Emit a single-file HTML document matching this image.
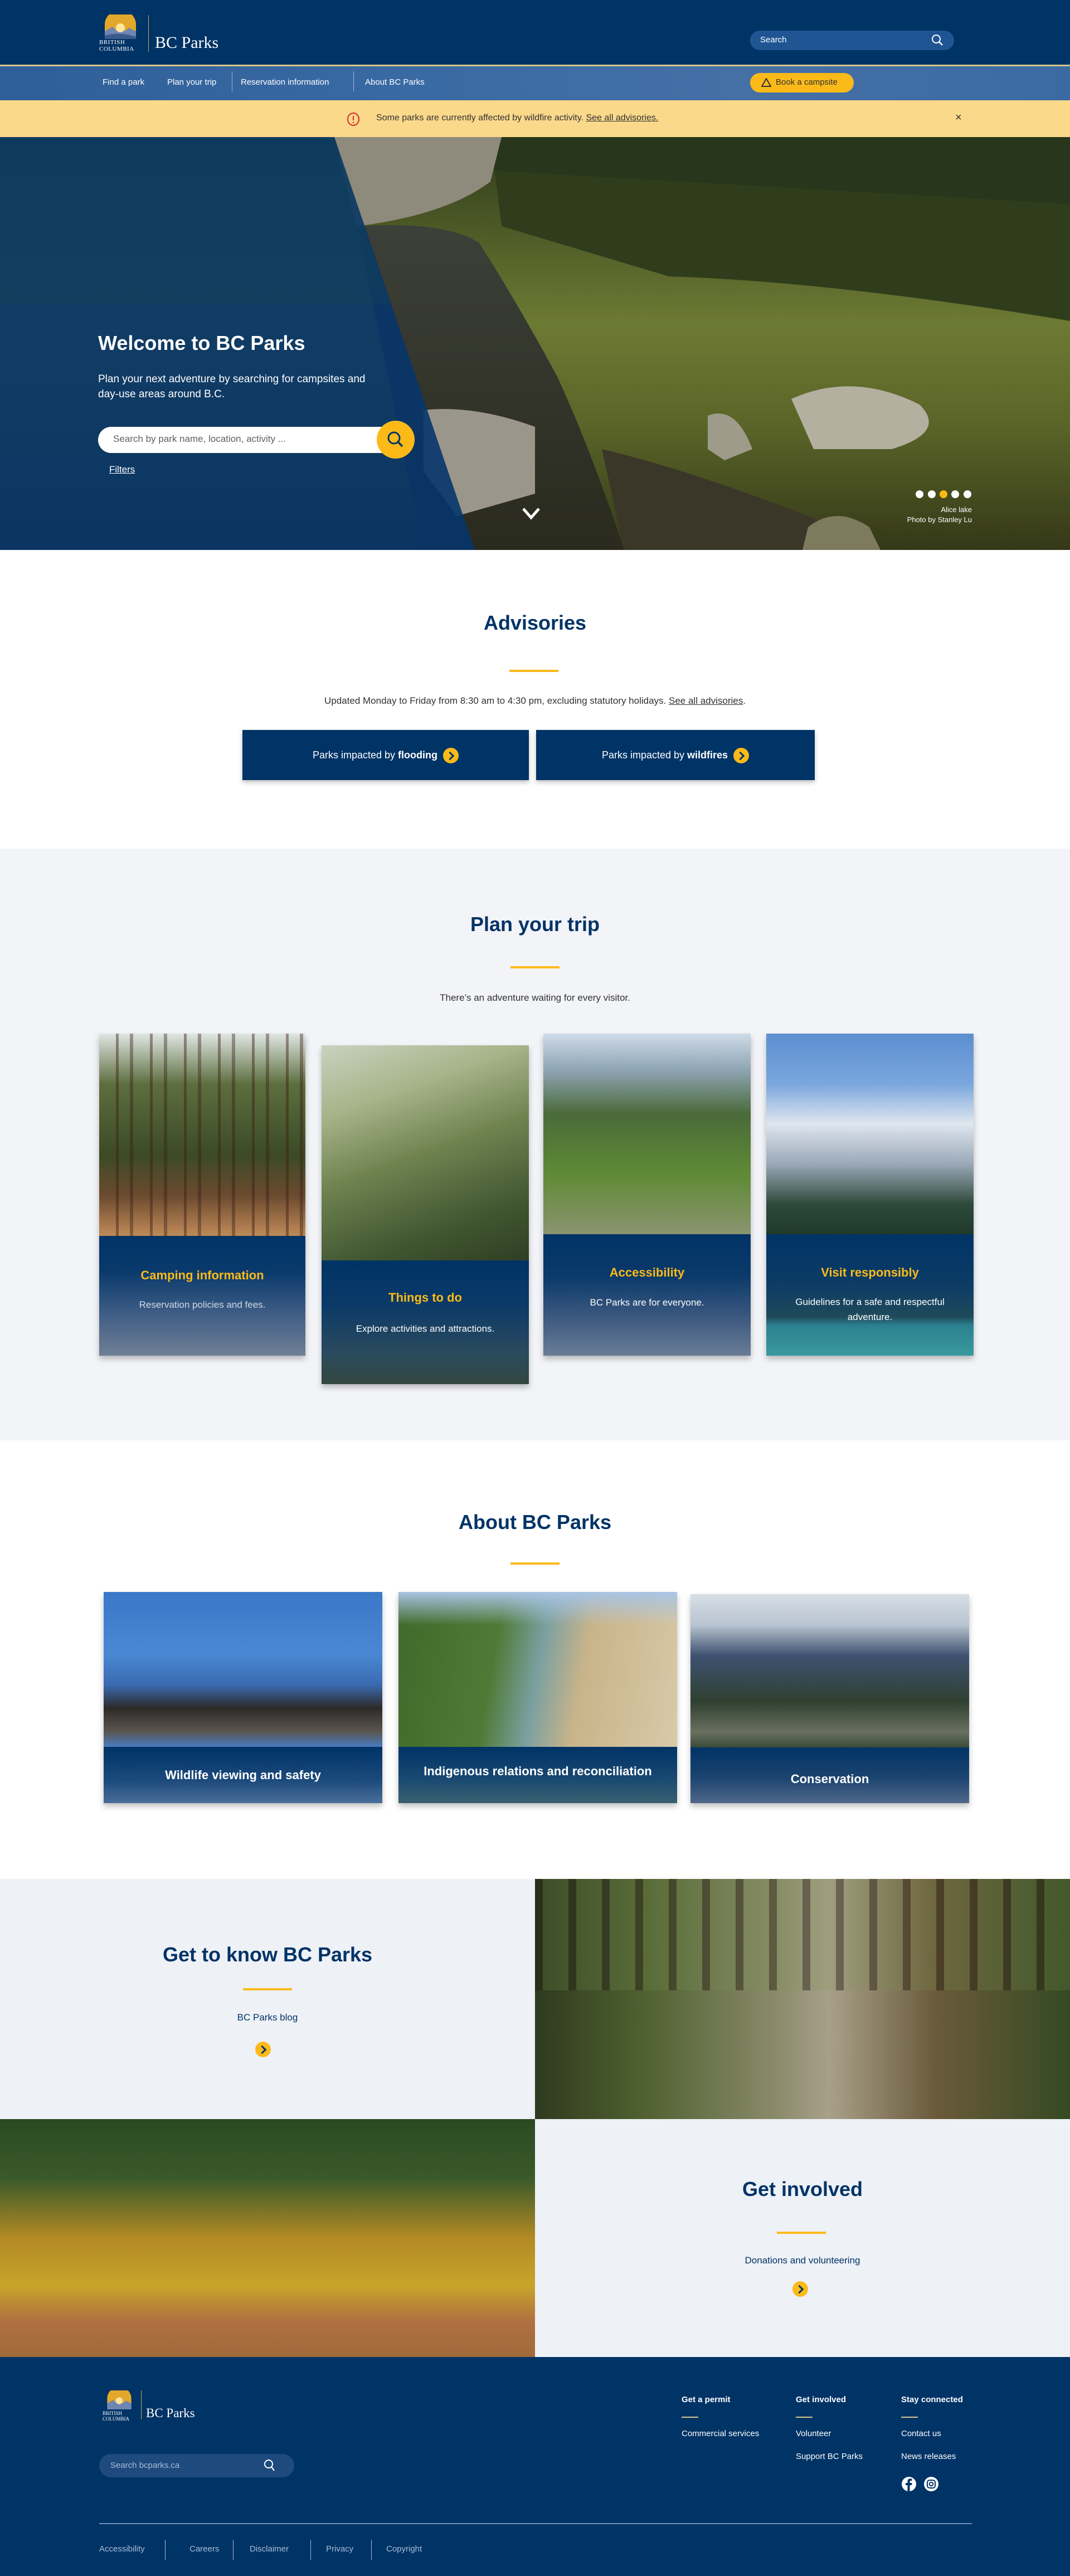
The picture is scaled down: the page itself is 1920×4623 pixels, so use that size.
<!DOCTYPE html>
<html><head><meta charset="utf-8">
<style>
*{margin:0;padding:0;box-sizing:border-box}
body{width:1920px;height:4623px;position:relative;font-family:"Liberation Sans",sans-serif;background:#fff;overflow:hidden;color:#313132}
.abs{position:absolute}
.h2{position:absolute;left:0;width:100%;text-align:center;font-size:36px;font-weight:bold;color:#003366}
.gl{position:absolute;height:4px;background:#fcba19;width:88px}
.card{position:absolute;box-shadow:0 6px 10px rgba(0,0,0,.25);overflow:hidden}
.ct{position:absolute;left:0;width:100%;text-align:center;color:#fcba19;font-weight:bold;font-size:22px}
.cd{position:absolute;left:0;width:100%;text-align:center;color:#fff;font-size:17px;line-height:27px;padding:0 30px}
.arr{display:inline-block;width:28px;height:28px;border-radius:50%;background:#fcba19;vertical-align:middle;position:relative}
.arr:after{content:"";position:absolute;left:7px;top:9px;width:8px;height:8px;border-right:3px solid #003366;border-top:3px solid #003366;transform:rotate(45deg)}
.fl{position:absolute;color:#fff;font-size:15px}
</style></head><body>

<!-- header -->
<div class="abs" style="left:0;top:0;width:1920px;height:116px;background:#003366"></div>
<svg class="abs" style="left:184px;top:26px" width="64" height="44" viewBox="0 0 64 44">
<path d="M4 44 V18 A28 26 0 0 1 60 18 V44 Z" fill="#e3a82b"/>
<path d="M4 44 V30 L18 22 L26 30 L32 20 L40 30 L48 24 L60 30 V44 Z" fill="#6e86b3"/>
<path d="M4 38 Q30 30 60 40 V44 H4Z" fill="#3d5a8c"/>
<circle cx="32" cy="24" r="8" fill="#fbe6a0"/>
</svg>
<div class="abs" style="left:178px;top:70px;color:#fff;font-family:'Liberation Serif',serif;font-size:11px;line-height:12px;letter-spacing:.5px">BRITISH<br>COLUMBIA</div>
<div class="abs" style="left:266px;top:27px;width:1px;height:66px;background:#c9a94c"></div>
<div class="abs" style="left:278px;top:60px;color:#fff;font-family:'Liberation Serif',serif;font-size:30px">BC Parks</div>
<div class="abs" style="left:1346px;top:55px;width:366px;height:35px;border-radius:18px;background:#1f5592"></div>
<div class="abs" style="left:1364px;top:63px;color:#fff;font-size:15px">Search</div>
<svg class="abs" style="left:1670px;top:60px" width="24" height="24" viewBox="0 0 24 24"><circle cx="10" cy="10" r="7" stroke="#fff" stroke-width="2" fill="none"/><path d="M15 15 L21 21" stroke="#fff" stroke-width="2.5"/></svg>
<div class="abs" style="left:0;top:116px;width:1920px;height:3px;background:#d6c68a"></div>
<div class="abs" style="left:0;top:119px;width:1920px;height:61px;background:linear-gradient(90deg,#2f5f99,#3a6aa3 40%,#4570a6 70%,#3b6aa3)"></div>
<div class="abs" style="left:184px;top:139px;color:#fff;font-size:15px">Find a park</div>
<div class="abs" style="left:300px;top:139px;color:#fff;font-size:15px">Plan your trip</div>
<div class="abs" style="left:416px;top:128px;width:1px;height:36px;background:#9fb6d6"></div>
<div class="abs" style="left:432px;top:139px;color:#fff;font-size:15px">Reservation information</div>
<div class="abs" style="left:634px;top:128px;width:1px;height:36px;background:#9fb6d6"></div>
<div class="abs" style="left:655px;top:139px;color:#fff;font-size:15px">About BC Parks</div>
<div class="abs" style="left:1346px;top:131px;width:186px;height:35px;border-radius:18px;background:#fcba19"></div>
<svg class="abs" style="left:1366px;top:140px" width="18" height="16" viewBox="0 0 18 16"><path d="M9 1 L17 15 H1 Z" fill="none" stroke="#313132" stroke-width="2"/></svg>
<div class="abs" style="left:1392px;top:139px;color:#313132;font-size:15px">Book a campsite</div>
<!-- banner -->
<div class="abs" style="left:0;top:180px;width:1920px;height:66px;background:#fbd98a"></div>
<svg class="abs" style="left:622px;top:201px" width="24" height="26" viewBox="0 0 24 26"><ellipse cx="12" cy="13" rx="10" ry="11" fill="none" stroke="#d8292f" stroke-width="2"/><path d="M12 7 V15" stroke="#d8292f" stroke-width="2"/><circle cx="12" cy="19" r="1.2" fill="#d8292f"/></svg>
<div class="abs" style="left:675px;top:203px;font-size:16px;color:#313132">Some parks are currently affected by wildfire activity. <u>See all advisories.</u></div>
<div class="abs" style="left:1714px;top:200px;font-size:20px;color:#313132">×</div>

<!-- hero -->
<svg class="abs" style="left:0;top:246px" width="1920" height="741" viewBox="0 0 1920 741">
<defs>
<linearGradient id="hg" x1="0" y1="0" x2="0" y2="1"><stop offset="0" stop-color="#2e3a1a"/><stop offset=".45" stop-color="#6d7a33"/><stop offset=".7" stop-color="#5a6428"/><stop offset="1" stop-color="#343818"/></linearGradient>
<linearGradient id="wt" x1="0" y1="0" x2="0" y2="1"><stop offset="0" stop-color="#3c4038"/><stop offset="1" stop-color="#2a2a1e"/></linearGradient>
</defs>
<rect width="1920" height="741" fill="url(#hg)"/>
<path d="M880 0 H1920 V330 Q1500 260 1200 250 L900 160 Z" fill="#2f3d1c"/>
<path d="M880 0 H1920 V120 L880 60 Z" fill="#25321a" opacity=".6"/>
<path d="M600 0 H900 L880 80 Q800 140 640 160 Z" fill="#8e8a7c"/>
<path d="M640 160 Q800 150 860 190 Q930 300 1000 430 Q1060 560 1120 741 H760 L690 400 Z" fill="url(#wt)"/>
<path d="M1080 560 Q1250 600 1500 700 L1560 741 H1120 Z" fill="#3a3628"/>
<path d="M1420 470 Q1530 420 1650 480 Q1700 530 1600 560 L1460 560 Z" fill="#b3b0a0"/>
<path d="M1270 500 Q1320 480 1350 560 L1300 580 L1270 560 Z" fill="#9e9b8b"/>
<path d="M760 490 Q850 480 960 520 L960 640 L820 680 L760 600 Z" fill="#9a968a"/>
<path d="M1450 700 Q1500 660 1560 700 L1580 741 H1440 Z" fill="#7d7a5e"/>
<path d="M0 0 H600 L852 741 H0 Z" fill="#07356a" opacity=".9"/>
<path d="M0 0 H600 L700 300 L0 300 Z" fill="#1d4a50" opacity=".25"/>
</svg>
<div class="abs" style="left:176px;top:595px;color:#fff;font-size:36px;font-weight:bold">Welcome to BC Parks</div>
<div class="abs" style="left:176px;top:667px;color:#fff;font-size:19px;line-height:27px;width:560px">Plan your next adventure by searching for campsites and<br>day-use areas around B.C.</div>
<div class="abs" style="left:176px;top:766px;width:540px;height:47px;border-radius:24px;background:#fff"></div>
<div class="abs" style="left:203px;top:778px;color:#606060;font-size:17px">Search by park name, location, activity ...</div>
<div class="abs" style="left:676px;top:755px;width:68px;height:68px;border-radius:50%;background:#fcba19"></div>
<svg class="abs" style="left:692px;top:771px" width="36" height="36" viewBox="0 0 36 36"><circle cx="15" cy="15" r="10" stroke="#003366" stroke-width="3" fill="none"/><path d="M22 22 L30 30" stroke="#003366" stroke-width="3.5"/></svg>
<div class="abs" style="left:196px;top:833px;color:#fff;font-size:17px;text-decoration:underline">Filters</div>
<svg class="abs" style="left:936px;top:910px" width="34" height="24" viewBox="0 0 34 24"><path d="M3 3 L17 19 L31 3" stroke="#fff" stroke-width="5" fill="none"/></svg>
<div class="abs" style="left:1643px;top:880px;width:14px;height:14px;border-radius:50%;background:#fff"></div>
<div class="abs" style="left:1665px;top:880px;width:14px;height:14px;border-radius:50%;background:#fff"></div>
<div class="abs" style="left:1686px;top:880px;width:14px;height:14px;border-radius:50%;background:#fcba19"></div>
<div class="abs" style="left:1707px;top:880px;width:14px;height:14px;border-radius:50%;background:#fff"></div>
<div class="abs" style="left:1729px;top:880px;width:14px;height:14px;border-radius:50%;background:#fff"></div>
<div class="abs" style="left:1500px;top:906px;width:244px;text-align:right;color:#fff;font-size:13px;line-height:18px">Alice lake<br>Photo by Stanley Lu</div>

<!-- advisories -->
<div class="h2" style="top:1097px">Advisories</div>
<div class="gl" style="left:914px;top:1202px"></div>
<div class="abs" style="left:0;width:1920px;top:1248px;text-align:center;font-size:17px">Updated Monday to Friday from 8:30 am to 4:30 pm, excluding statutory holidays. <u>See all advisories</u>.</div>
<div class="abs" style="left:435px;top:1310px;width:514px;height:90px;background:#003366;box-shadow:0 4px 8px rgba(0,0,0,.25);color:#fff;font-size:18px;text-align:center;line-height:90px">Parks impacted by <b>flooding</b> &nbsp;<span class="arr"></span></div>
<div class="abs" style="left:962px;top:1310px;width:500px;height:90px;background:#003366;box-shadow:0 4px 8px rgba(0,0,0,.25);color:#fff;font-size:18px;text-align:center;line-height:90px">Parks impacted by <b>wildfires</b> &nbsp;<span class="arr"></span></div>

<!-- plan your trip -->
<div class="abs" style="left:0;top:1523px;width:1920px;height:1062px;background:#f3f4f8"></div>
<div class="h2" style="top:1638px">Plan your trip</div>
<div class="gl" style="left:916px;top:1734px"></div>
<div class="abs" style="left:0;width:1920px;top:1781px;text-align:center;font-size:17px">There’s an adventure waiting for every visitor.</div>

<div class="card" style="left:178px;top:1855px;width:370px;height:578px">
<div style="height:363px;background:linear-gradient(180deg,#dfe6e4 0%,#5d6e3e 25%,#3c4a26 60%,#6b4a2f 80%,#c08a58 100%)"></div>
<div style="position:absolute;left:0;top:0;width:370px;height:363px;background:repeating-linear-gradient(90deg,transparent 0 30px,rgba(60,30,20,.45) 30px 35px,transparent 35px 55px,rgba(50,30,20,.4) 55px 61px)"></div>
<div style="position:absolute;left:0;top:363px;width:370px;height:215px;background:linear-gradient(180deg,#003366 0%,#0a3a6c 30%,#3f5d86 65%,#707f95 100%)"></div>
<div class="ct" style="top:421px">Camping information</div>
<div class="cd" style="top:473px;color:#d0d8e4">Reservation policies and fees.</div>
</div>

<div class="card" style="left:577px;top:1876px;width:372px;height:608px">
<div style="height:386px;background:linear-gradient(160deg,#c9d2c0 0%,#a8b48a 25%,#6f8350 50%,#3f5530 80%,#2f3f24 100%)"></div>
<div style="position:absolute;left:0;top:386px;width:372px;height:222px;background:linear-gradient(180deg,#003366 0%,#0b3a68 35%,#2a4a5e 75%,#33473f 100%)"></div>
<div class="ct" style="top:440px">Things to do</div>
<div class="cd" style="top:495px">Explore activities and attractions.</div>
</div>

<div class="card" style="left:975px;top:1855px;width:372px;height:578px">
<div style="height:360px;background:linear-gradient(180deg,#cfdbe8 0%,#8fa5b5 18%,#4a6a3a 40%,#5f8a35 70%,#8a9470 100%)"></div>
<div style="position:absolute;left:0;top:360px;width:372px;height:218px;background:linear-gradient(180deg,#003366 0%,#0b3a6a 35%,#3e5a80 70%,#6a7d96 100%)"></div>
<div class="ct" style="top:416px">Accessibility</div>
<div class="cd" style="top:469px">BC Parks are for everyone.</div>
</div>

<div class="card" style="left:1375px;top:1855px;width:372px;height:578px">
<div style="height:360px;background:linear-gradient(180deg,#5c8fd0 0%,#7aa6de 25%,#dfe6ee 45%,#9aa8b8 65%,#2e4a3a 85%,#1f3a2a 100%)"></div>
<div style="position:absolute;left:0;top:360px;width:372px;height:218px;background:linear-gradient(180deg,#003366 0%,#0c3b66 40%,#1f4a5a 68%,#2b8090 75%,#3a9a9e 100%)"></div>
<div class="ct" style="top:416px">Visit responsibly</div>
<div class="cd" style="top:468px">Guidelines for a safe and respectful adventure.</div>
</div>

<!-- about -->
<div class="h2" style="top:2711px">About BC Parks</div>
<div class="gl" style="left:916px;top:2804px"></div>
<div class="card" style="left:186px;top:2857px;width:500px;height:379px">
<div style="height:278px;background:linear-gradient(180deg,#3a78c8 0%,#4a88d4 40%,#3a6ab0 60%,#2d2a28 75%,#5a5550 90%,#4a7ac0 100%)"></div>
<div style="position:absolute;left:0;top:278px;width:500px;height:101px;background:linear-gradient(180deg,#003366,#1c4a7c 60%,#4a6e98)"></div>
<div class="ct" style="top:316px;color:#fff">Wildlife viewing and safety</div>
</div>
<div class="card" style="left:715px;top:2857px;width:500px;height:379px">
<div style="height:278px;background:linear-gradient(100deg,#3e6a2a 0%,#4f7a36 35%,#7aa0a0 50%,#c9b48a 65%,#d8c9a8 100%)"></div>
<div style="position:absolute;left:0;top:0;width:500px;height:60px;background:linear-gradient(180deg,#a8c4e4,transparent)"></div>
<div style="position:absolute;left:0;top:278px;width:500px;height:101px;background:linear-gradient(180deg,#003366,#1b4a72 60%,#3a6070)"></div>
<div class="ct" style="top:309px;color:#fff">Indigenous relations and reconciliation</div>
</div>
<div class="card" style="left:1239px;top:2861px;width:500px;height:375px">
<div style="height:275px;background:linear-gradient(180deg,#d8dfe6 0%,#b8c4d0 20%,#3e5272 40%,#2f4030 70%,#6a7060 90%,#3a4a38 100%)"></div>
<div style="position:absolute;left:0;top:275px;width:500px;height:100px;background:linear-gradient(180deg,#003366,#1c4470 55%,#50688a)"></div>
<div class="ct" style="top:319px;color:#fff">Conservation</div>
</div>

<!-- get to know -->
<div class="abs" style="left:0;top:3372px;width:960px;height:431px;background:#eef1f6"></div>
<div class="abs" style="left:960px;top:3372px;width:960px;height:431px;background:linear-gradient(90deg,#2e3a1e 0%,#4f6030 20%,#8a8a6a 45%,#a8a08a 55%,#6a5a3a 75%,#354a22 100%)"></div>
<div class="abs" style="left:960px;top:3372px;width:960px;height:200px;background:repeating-linear-gradient(90deg,rgba(40,30,20,.45) 0 14px,rgba(120,150,80,.2) 14px 60px)"></div>
<div class="abs" style="left:0;top:3487px;width:960px;text-align:center;font-size:36px;font-weight:bold;color:#003366">Get to know BC Parks</div>
<div class="gl" style="left:436px;top:3568px"></div>
<div class="abs" style="left:0;top:3611px;width:960px;text-align:center;font-size:17px;color:#003366">BC Parks blog</div>
<div class="abs" style="left:458px;top:3664px"><span class="arr"></span></div>

<div class="abs" style="left:0;top:3803px;width:960px;height:427px;background:linear-gradient(180deg,#2a4a22 0%,#3a5a2a 25%,#b38a24 50%,#c7a42a 70%,#b07040 85%,#a06a3a 100%)"></div>
<div class="abs" style="left:960px;top:3803px;width:960px;height:427px;background:#eef1f6"></div>
<div class="abs" style="left:960px;top:3908px;width:960px;text-align:center;font-size:36px;font-weight:bold;color:#003366">Get involved</div>
<div class="gl" style="left:1394px;top:4005px"></div>
<div class="abs" style="left:960px;top:4047px;width:960px;text-align:center;font-size:17px;color:#003366">Donations and volunteering</div>
<div class="abs" style="left:1422px;top:4094px"><span class="arr"></span></div>

<!-- footer -->
<div class="abs" style="left:0;top:4230px;width:1920px;height:393px;background:#003366"></div>
<svg class="abs" style="left:188px;top:4290px" width="52" height="34" viewBox="0 0 64 44">
<path d="M4 44 V18 A28 26 0 0 1 60 18 V44 Z" fill="#e3a82b"/>
<path d="M4 44 V30 L18 22 L26 30 L32 20 L40 30 L48 24 L60 30 V44 Z" fill="#6e86b3"/>
<circle cx="32" cy="24" r="8" fill="#fbe6a0"/>
</svg>
<div class="abs" style="left:184px;top:4326px;color:#fff;font-family:'Liberation Serif',serif;font-size:9px;line-height:10px">BRITISH<br>COLUMBIA</div>
<div class="abs" style="left:253px;top:4290px;width:1px;height:52px;background:#c9a94c"></div>
<div class="abs" style="left:262px;top:4318px;color:#fff;font-family:'Liberation Serif',serif;font-size:23px">BC Parks</div>
<div class="abs" style="left:178px;top:4404px;width:350px;height:42px;border-radius:21px;background:#1e4a7e"></div>
<div class="abs" style="left:198px;top:4416px;color:#a9bcd6;font-size:15px">Search bcparks.ca</div>
<svg class="abs" style="left:472px;top:4412px" width="24" height="26" viewBox="0 0 24 26"><circle cx="10" cy="10" r="7" stroke="#fff" stroke-width="2" fill="none"/><path d="M15 15 L20 22" stroke="#fff" stroke-width="2.2"/></svg>
<div class="fl" style="left:1223px;top:4298px;font-weight:bold">Get a permit</div>
<div class="fl" style="left:1428px;top:4298px;font-weight:bold">Get involved</div>
<div class="fl" style="left:1617px;top:4298px;font-weight:bold">Stay connected</div>
<div class="abs" style="left:1223px;top:4337px;width:30px;height:2px;background:#d6c68a"></div>
<div class="abs" style="left:1428px;top:4337px;width:30px;height:2px;background:#d6c68a"></div>
<div class="abs" style="left:1617px;top:4337px;width:30px;height:2px;background:#d6c68a"></div>
<div class="fl" style="left:1223px;top:4359px">Commercial services</div>
<div class="fl" style="left:1428px;top:4359px">Volunteer</div>
<div class="fl" style="left:1617px;top:4359px">Contact us</div>
<div class="fl" style="left:1428px;top:4400px">Support BC Parks</div>
<div class="fl" style="left:1617px;top:4400px">News releases</div>
<svg class="abs" style="left:1617px;top:4444px" width="28" height="28" viewBox="0 0 28 28"><circle cx="14" cy="14" r="13" fill="#fff"/><path d="M15.5 27 V16 H19 L19.5 12 H15.5 V10 C15.5 8.8 16 8 17.5 8 H19.5 V4.5 C18.5 4.3 17.3 4.2 16.3 4.2 C13.3 4.2 11.5 6 11.5 9.3 V12 H8 V16 H11.5 V27 Z" fill="#003366"/></svg>
<svg class="abs" style="left:1657px;top:4444px" width="28" height="28" viewBox="0 0 28 28"><circle cx="14" cy="14" r="13" fill="#fff"/><rect x="7" y="7" width="14" height="14" rx="4" fill="none" stroke="#003366" stroke-width="2"/><circle cx="14" cy="14" r="3.3" fill="none" stroke="#003366" stroke-width="2"/></svg>
<div class="abs" style="left:178px;top:4528px;width:1566px;height:2px;background:#6f8fba"></div>
<div class="abs" style="left:178px;top:4566px;color:#a9bcd6;font-size:15px">Accessibility</div>
<div class="abs" style="left:296px;top:4558px;width:1px;height:36px;background:#a9bcd6"></div>
<div class="abs" style="left:340px;top:4566px;color:#a9bcd6;font-size:15px">Careers</div>
<div class="abs" style="left:418px;top:4558px;width:1px;height:36px;background:#a9bcd6"></div>
<div class="abs" style="left:448px;top:4566px;color:#a9bcd6;font-size:15px">Disclaimer</div>
<div class="abs" style="left:557px;top:4558px;width:1px;height:36px;background:#a9bcd6"></div>
<div class="abs" style="left:585px;top:4566px;color:#a9bcd6;font-size:15px">Privacy</div>
<div class="abs" style="left:666px;top:4558px;width:1px;height:36px;background:#a9bcd6"></div>
<div class="abs" style="left:693px;top:4566px;color:#a9bcd6;font-size:15px">Copyright</div>
</body></html>
